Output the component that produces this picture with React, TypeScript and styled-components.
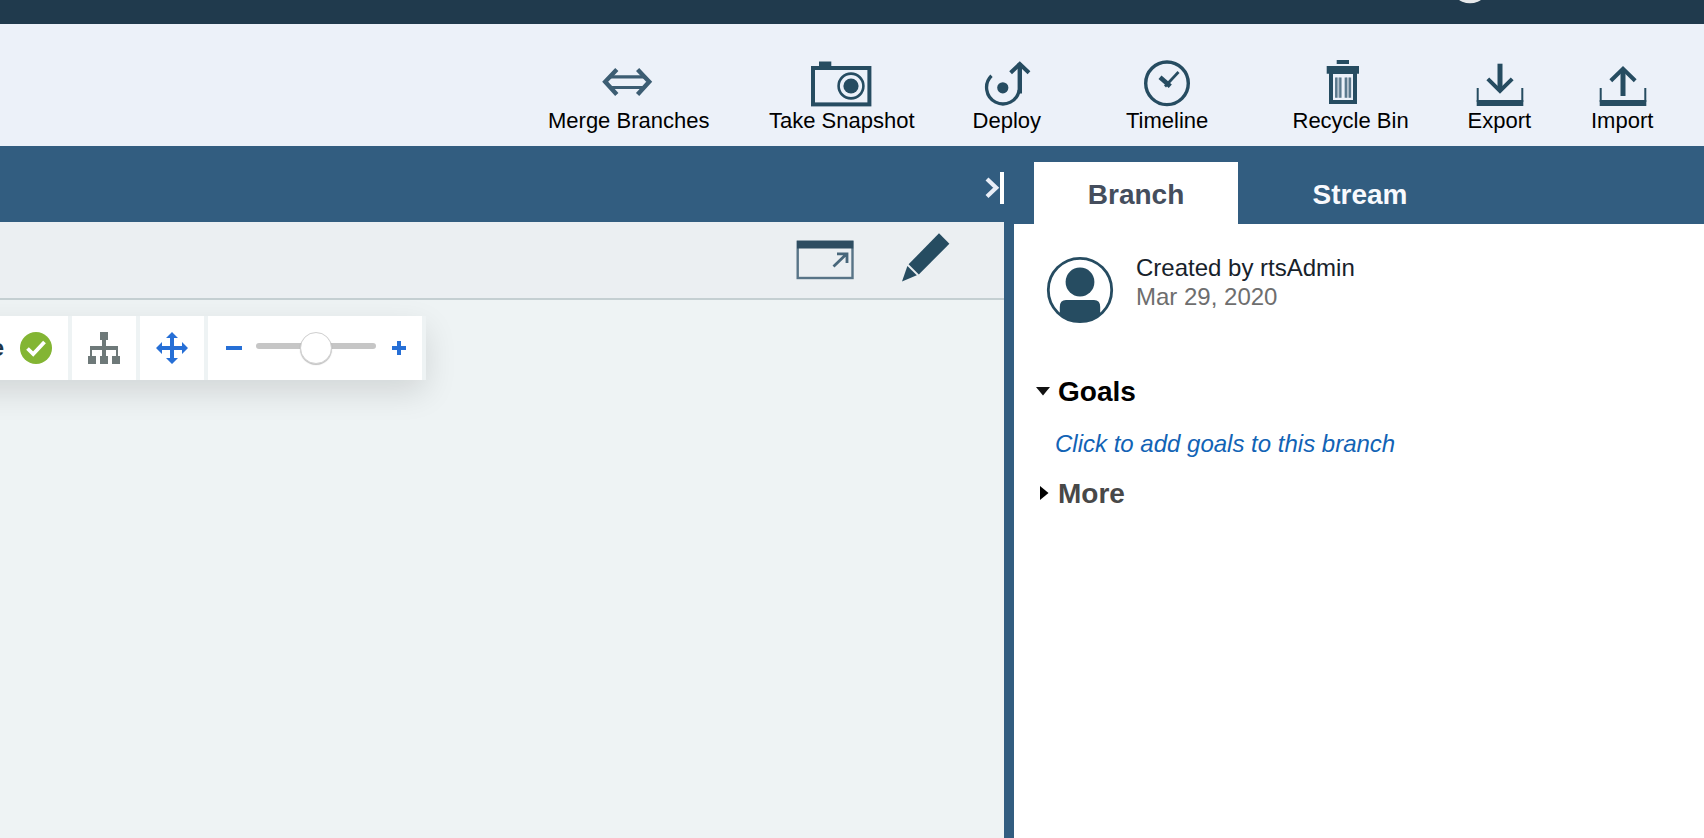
import React from "react";
import styled, { createGlobalStyle } from "styled-components";

const INK = "#264c61";
const BLUE = "#325d80";

const GlobalStyle = createGlobalStyle`
  *, *::before, *::after { box-sizing: border-box; }
  body { margin: 0; overflow: hidden; font-family: "Liberation Sans", Arial, Helvetica, sans-serif; }
  svg { display: block; flex: none; }
`;

const Page = styled.div`
  display: flex;
  flex-direction: column;
  width: 1704px;
  height: 838px;
  overflow: hidden;
`;

const TopBar = styled.header`
  flex: none;
  display: flex;
  height: 24px;
  padding-left: 1458px;
  background: #203a4d;
`;

const Toolbar = styled.nav`
  flex: none;
  display: flex;
  height: 122px;
  padding: 36px 0 0 548px;
  background: #ecf1f9;
`;

const Tool = styled.button<{ $width: number; $gap: number }>`
  display: flex;
  flex: none;
  flex-direction: column;
  align-items: center;
  width: ${(p) => p.$width}px;
  margin: 0 ${(p) => p.$gap}px 0 0;
  padding: 0;
  border: 0;
  background: none;
  font: 22px/25px "Liberation Sans", Arial, sans-serif;
  color: #000;
  white-space: nowrap;
`;

const ToolLabel = styled.span<{ $indent?: number }>`
  align-self: stretch;
  padding-left: ${(p) => p.$indent ?? 0}px;
  text-align: left;
`;

const Body = styled.div`
  flex: 1;
  display: flex;
  min-height: 0;
  background: ${BLUE};
`;

const Workspace = styled.main`
  display: flex;
  flex-direction: column;
  width: 1004px;
  margin-right: 10px;
`;

const WorkspaceHeader = styled.div`
  flex: none;
  display: flex;
  justify-content: flex-end;
  align-items: flex-start;
  height: 76px;
  padding-top: 26px;
`;

const CanvasActions = styled.div`
  flex: none;
  display: flex;
  justify-content: flex-end;
  gap: 46px;
  height: 78px;
  padding: 8px 52px 0 0;
  border-bottom: 2px solid #c4cfd2;
  background: #ebeff2;
`;

const Canvas = styled.div`
  flex: 1;
  padding-top: 16px;
  background: #eef3f4;
  overflow: hidden;
`;

const FloatingBar = styled.div`
  display: flex;
  gap: 4px;
  width: 486px;
  height: 64px;
  margin-left: -60px;
  padding-right: 4px;
  background: #eef3f4;
  box-shadow: 0 12px 32px rgba(0, 0, 0, 0.12);
`;

const BarCell = styled.div<{ $width: number; $align?: string }>`
  display: flex;
  flex: none;
  align-items: center;
  justify-content: ${(p) => p.$align ?? "center"};
  width: ${(p) => p.$width}px;
  background: #fff;
`;

const StatusText = styled.span`
  display: flex;
  justify-content: flex-end;
  width: 64px;
  margin-right: 16px;
  font-size: 24px;
  font-weight: 700;
  color: #1d3649;
`;

const Minus = styled.span`
  width: 16px;
  height: 4px;
  margin-left: 18px;
  background: #266fd6;
`;

const Track = styled.div`
  display: flex;
  justify-content: center;
  align-items: center;
  width: 120px;
  height: 6px;
  margin: -4px 16px 0 14px;
  border-radius: 3px;
  background: #c6c6c6;
`;

const Thumb = styled.div`
  flex: none;
  width: 32px;
  height: 32px;
  margin-top: 4px;
  border: 1px solid #d0d0d0;
  border-radius: 50%;
  background: #fff;
  box-shadow: 0 1px 1px rgba(0, 0, 0, 0.25);
`;

const SidePanel = styled.aside`
  flex: 1;
  display: flex;
  flex-direction: column;
`;

const Tabs = styled.div`
  flex: none;
  display: flex;
  gap: 20px;
  height: 78px;
  padding: 16px 0 0 20px;
`;

const Tab = styled.button<{ $active?: boolean }>`
  width: 204px;
  padding: 3px 0 0;
  border: 0;
  background: ${(p) => (p.$active ? "#fff" : "transparent")};
  color: ${(p) => (p.$active ? "#454e5d" : "#f8f9fd")};
  font: 700 28px/32px "Liberation Sans", Arial, sans-serif;
`;

const Details = styled.section`
  flex: 1;
  padding: 29px 0 0 22px;
  background: #fff;
`;

const Creator = styled.div`
  display: flex;
  gap: 22px;
  height: 123px;
`;

const CreatorText = styled.div`
  font-size: 24px;
  line-height: 29px;
  color: #17222b;
`;

const DateText = styled.div`
  color: #6e6e6e;
`;

const SectionTitle = styled.h2<{ $color: string }>`
  display: flex;
  align-items: center;
  gap: 8px;
  margin: 0;
  font-size: 28px;
  line-height: 32px;
  color: ${(p) => p.$color};
`;

const GoalsLink = styled.a`
  display: block;
  padding: 23px 0 21px 19px;
  font-size: 24px;
  font-style: italic;
  line-height: 26px;
  color: #1263b5;
`;

const Icon = ({ children }: { children: React.ReactNode }) => (
  <svg width="64" height="48" viewBox="0 0 64 48" fill="none" stroke={INK}>
    {children}
  </svg>
);

const tray = (
  <>
    <path d="M10.7 28v14M55.3 28v14" strokeWidth="2" />
    <path d="M9.7 43H56.3" strokeWidth="6" />
  </>
);

const tools = [
  {
    label: "Merge Branches", width: 162, gap: 59,
    art: (
      <g stroke="#3c5d73">
        <path d="M19.8 9.5 8.2 21.7 19.8 34.5M40.6 9.5 52.2 21.7 40.6 34.5" strokeWidth="4.4" />
        <path d="M13 16.9H48M13 27.5H48" strokeWidth="3.2" />
      </g>
    ),
  },
  {
    label: "Take Snapshot", width: 146, gap: 57,
    art: (
      <>
        <rect x="3" y="8" width="56.4" height="36.4" strokeWidth="4" />
        <path d="M9 4H21.3" strokeWidth="5" />
        <circle cx="41" cy="26" r="12.4" strokeWidth="2.6" />
        <circle cx="41" cy="26" r="7.6" fill={INK} stroke="none" />
      </>
    ),
  },
  {
    label: "Deploy", width: 70, gap: 84, indent: 0.6,
    art: (
      <>
        <circle cx="27.8" cy="27.8" r="5.6" fill={INK} stroke="none" />
        <path d="M16.5 15.8A16.4 16.4 0 1 0 44.2 30" strokeWidth="3.3" />
        <path d="M44.8 3.5V33.5" strokeWidth="4.4" />
        <path d="M35.6 12.8 44.8 4 54 12.8" strokeWidth="4" />
      </>
    ),
  },
  {
    label: "Timeline", width: 84, gap: 82,
    art: (
      <>
        <circle cx="31" cy="23.3" r="21.3" strokeWidth="3.4" />
        <path d="M42.5 12 29 26.5" strokeWidth="2.7" />
        <path d="M24 17.3 34.3 26.3" strokeWidth="4.6" />
      </>
    ),
  },
  {
    label: "Recycle Bin", width: 116, gap: 59, indent: 0.5,
    art: (
      <>
        <path d="M18.7 2H31" strokeWidth="4" />
        <path d="M8.7 9.9H41" strokeWidth="7.6" />
        <rect x="13" y="12" width="24" height="30" strokeWidth="4" />
        <path d="M20.3 17.6v20.2M29.9 17.6v20.2" stroke="#b4c2ce" strokeWidth="4" />
        <path d="M18.2 17.6v20.2M22.4 17.6v20.2M27.8 17.6v20.2M32 17.6v20.2" stroke="#5a788c" strokeWidth="2.3" />
      </>
    ),
  },
  {
    label: "Export", width: 64, gap: 60, indent: 0.5,
    art: (
      <>
        {tray}
        <path d="M33 3.7V31" strokeWidth="5" />
        <path d="M20.8 18.8 33 31 45.2 18.8" strokeWidth="4" />
      </>
    ),
  },
  {
    label: "Import", width: 62, gap: 0,
    art: (
      <>
        {tray}
        <path d="M33 9V36" strokeWidth="5" />
        <path d="M20.8 20.8 33 8.8 45.2 20.8" strokeWidth="4" />
      </>
    ),
  },
];

export default function App() {
  return (
    <Page>
      <GlobalStyle />
      <TopBar>
        <svg width="24" height="4" viewBox="0 0 24 4">
          <circle cx="12" cy="-17" r="20.2" fill="#e6e8ea" />
        </svg>
      </TopBar>
      <Toolbar>
        {tools.map((t) => (
          <Tool key={t.label} $width={t.width} $gap={t.gap}>
            <Icon>{t.art}</Icon>
            <ToolLabel $indent={t.indent}>{t.label}</ToolLabel>
          </Tool>
        ))}
      </Toolbar>
      <Body>
        <Workspace>
          <WorkspaceHeader>
            <svg width="20" height="32" viewBox="0 0 20 32" fill="none">
              <path d="M3 7 12.2 15.8 3 24.6" stroke="#e9eef7" strokeWidth="4.2" />
              <path d="M18 0v32" stroke="#fff" strokeWidth="4" />
            </svg>
          </WorkspaceHeader>
          <CanvasActions>
            <svg width="60" height="56" viewBox="0 0 60 56" fill="none">
              <rect x="3.7" y="11.8" width="54.8" height="36.2" stroke="#587487" strokeWidth="2.4" />
              <path d="M3 14.6H59.2" stroke="#2e4d61" strokeWidth="7.6" />
              <path d="M39.5 36.5 53 23.5M43 23.8H53V33" stroke="#48677b" strokeWidth="2.8" />
            </svg>
            <svg width="52" height="56" viewBox="900 230 52 56" fill={INK}>
              <path d="M939 233.3 949.4 243.7 918.8 274.5 908.6 264.3Z" />
              <path d="M907.4 266 916.8 275.3 902 281.5Z" />
            </svg>
          </CanvasActions>
          <Canvas>
            <FloatingBar>
              <BarCell $width={128} $align="flex-start">
                <StatusText>e</StatusText>
                <svg width="32" height="32" viewBox="0 0 32 32">
                  <circle cx="16" cy="16" r="16" fill="#83b533" />
                  <path d="M7.5 16.5 13.2 22 24.5 10" fill="none" stroke="#fff" strokeWidth="3.8" />
                </svg>
              </BarCell>
              <BarCell $width={64}>
                <svg width="32" height="32" viewBox="0 0 32 32" fill="#6e7979">
                  <path d="M12 0h8v8h-2v6h12v10h2v8h-8v-8h4v-6H18v6h2v8h-8v-8h2v-6H4v6h4v8H0v-8h2V14h12V8h-2z" />
                </svg>
              </BarCell>
              <BarCell $width={64}>
                <svg width="32" height="32" viewBox="0 0 32 32" fill="#266fd6">
                  <path d="M16 0l6 6h-4v8h8v-4l6 6-6 6v-4h-8v8h4l-6 6-6-6h4v-8H6v4l-6-6 6-6v4h8V6h-4z" />
                </svg>
              </BarCell>
              <BarCell $width={214} $align="flex-start">
                <Minus />
                <Track>
                  <Thumb />
                </Track>
                <svg width="14" height="14" viewBox="0 0 14 14">
                  <path d="M7 0v14M0 7h14" stroke="#266fd6" strokeWidth="4" />
                </svg>
              </BarCell>
            </FloatingBar>
          </Canvas>
        </Workspace>
        <SidePanel>
          <Tabs>
            <Tab $active>Branch</Tab>
            <Tab>Stream</Tab>
          </Tabs>
          <Details>
            <Creator>
              <svg width="78" height="72" viewBox="1036 253 78 72" fill={INK}>
                <circle cx="1080" cy="290" r="31.7" fill="none" stroke={INK} strokeWidth="2.8" />
                <circle cx="1080" cy="282" r="14.4" />
                <path d="M1059.8 314V307Q1059.8 300 1066 300H1094Q1100.2 300 1100.2 307V314A32 32 0 0 1 1059.8 314Z" />
              </svg>
              <CreatorText>
                Created by rtsAdmin
                <DateText>Mar 29, 2020</DateText>
              </CreatorText>
            </Creator>
            <SectionTitle $color="#000">
              <svg width="14" height="14" viewBox="0 0 14 14">
                <path d="M0 2H14L7 10.5Z" fill="#111" />
              </svg>
              Goals
            </SectionTitle>
            <GoalsLink>Click to add goals to this branch</GoalsLink>
            <SectionTitle $color="#484848">
              <svg width="14" height="16" viewBox="0 0 14 16">
                <path d="M4 0V14L12.5 7Z" fill="#000" />
              </svg>
              More
            </SectionTitle>
          </Details>
        </SidePanel>
      </Body>
    </Page>
  );
}
